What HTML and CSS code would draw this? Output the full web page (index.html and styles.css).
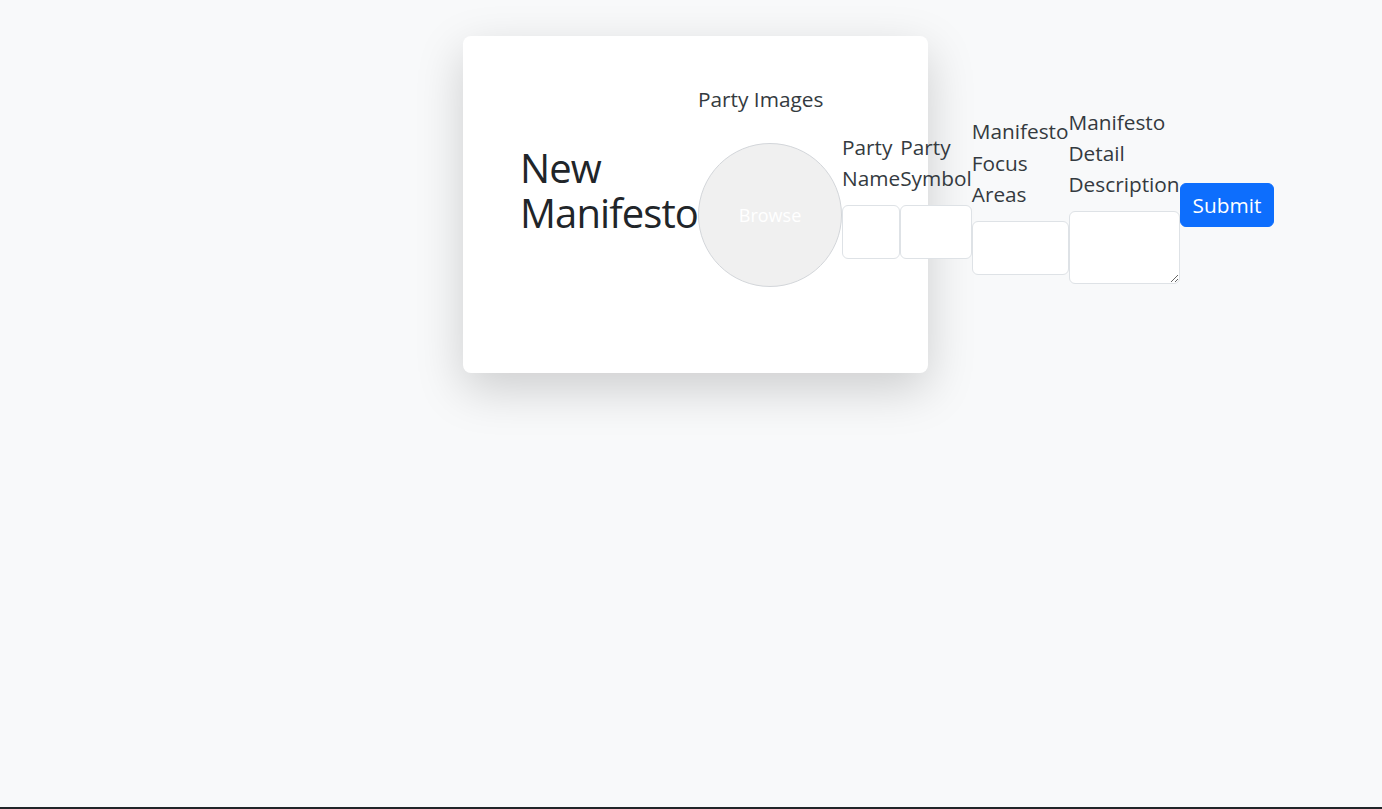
FILE: index.html
```html
<!DOCTYPE html>
<html lang="en">
<head>
<meta charset="utf-8">
<title>New Manifesto</title>
<link rel="stylesheet" href="styles.css">
</head>
<body>
<main class="page">
  <div class="card">
    <form class="form-row">
      <h1 class="title">New Manifesto</h1>
      <div class="field field-image">
        <label class="label">Party Images</label>
        <label class="upload"><span>Browse</span></label>
      </div>
      <div class="field">
        <label class="label">Party Name</label>
        <input class="control" type="text">
      </div>
      <div class="field">
        <label class="label">Party Symbol</label>
        <input class="control" type="text">
      </div>
      <div class="field">
        <label class="label">Manifesto Focus Areas</label>
        <input class="control" type="text">
      </div>
      <div class="field">
        <label class="label">Manifesto Detail Description</label>
        <textarea class="control control-area"></textarea>
      </div>
      <button class="btn-submit" type="button">Submit</button>
    </form>
  </div>
</main>
<footer class="footer"></footer>
</body>
</html>
```
FILE: styles.css
```css
html, body {
  margin: 0;
  padding: 0;
}
body {
  font-family: "Open Sans", "Noto Sans", sans-serif;
  background: #f8f9fa;
  color: #212529;
}
.page {
  box-sizing: border-box;
  height: 807px;
  padding: 36px 0 0 463px;
}
.card {
  box-sizing: border-box;
  width: 465px;
  padding: 48px 57px 66px;
  background: #fff;
  border-radius: 8px;
  box-shadow: 0 1rem 3rem rgba(0, 0, 0, 0.175);
}
.form-row {
  display: flex;
  align-items: center;
  margin: 0;
}
.title {
  margin: 0 0 11px;
  font-size: 40px;
  line-height: 45px;
  font-weight: 400;
  letter-spacing: -0.9px;
  color: #212529;
}
.field {
  display: flex;
  flex-direction: column;
}
.label {
  font-size: 20.8px;
  line-height: 31.2px;
  margin-bottom: 11px;
  color: #343a40;
}
.field-image {
  margin-bottom: 20px;
}
.field-image .label {
  margin-bottom: 28px;
}
.upload {
  box-sizing: border-box;
  width: 144px;
  height: 144px;
  border-radius: 50%;
  border: 1px solid #d3d6da;
  background: #f0f0f0;
  color: #fff;
  font-size: 18px;
  display: flex;
  align-items: center;
  justify-content: center;
}
.control {
  box-sizing: border-box;
  display: block;
  width: 100%;
  height: 54px;
  margin: 0;
  padding: 6px 12px;
  border: 1px solid #dee2e6;
  border-radius: 6px;
  background: #fff;
  font-family: inherit;
  font-size: 16px;
}
.control-area {
  height: 73px;
}
.btn-submit {
  margin-top: 19px;
  padding: 6px 12px;
  border: 1px solid #0d6efd;
  border-radius: 6px;
  background: #0d6efd;
  color: #fff;
  font-family: inherit;
  font-size: 20.8px;
  line-height: 30.4px;
}
.footer {
  height: 40px;
  background: #212529;
}
```
